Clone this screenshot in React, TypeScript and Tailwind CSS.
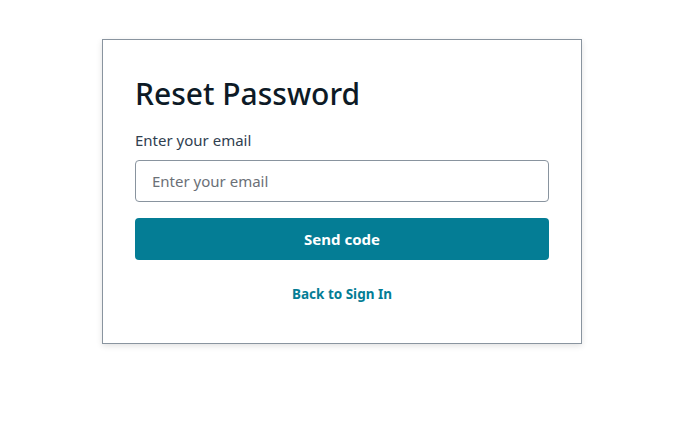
import React from 'react';

const App: React.FC = () => {
  return (
    <div className="min-h-screen bg-white flex justify-center pr-2 pt-[39px]" style={{ fontFamily: '"Noto Sans", "Open Sans", sans-serif' }}>
      <div className="w-[480px] h-[305px] border border-[#89949f] bg-white shadow-[0_2px_6px_rgba(0,0,0,0.12)] p-8 flex flex-col">
        <h3 className="text-[30px] leading-[40px] pt-[2px] -mb-[2px] font-medium text-[#0d1a26]">Reset Password</h3>

        <label htmlFor="email" className="mt-4 text-[15px] leading-6 text-[#304050]">
          Enter your email
        </label>
        <input
          id="email"
          type="email"
          placeholder="Enter your email"
          className="mt-2 h-[42px] w-full rounded border border-[#89949f] px-4 text-[15px] text-[#0d1a26] placeholder:text-[#6b7077] outline-none"
        />

        <button className="mt-4 h-[42px] w-full rounded bg-[#047d95] text-[15px] font-bold text-white">
          Send code
        </button>

        <button className="mt-4 pt-[2px] h-[34px] w-full text-[13.5px] font-bold text-[#047d95]">
          Back to Sign In
        </button>
      </div>
    </div>
  );
};

export default App;
